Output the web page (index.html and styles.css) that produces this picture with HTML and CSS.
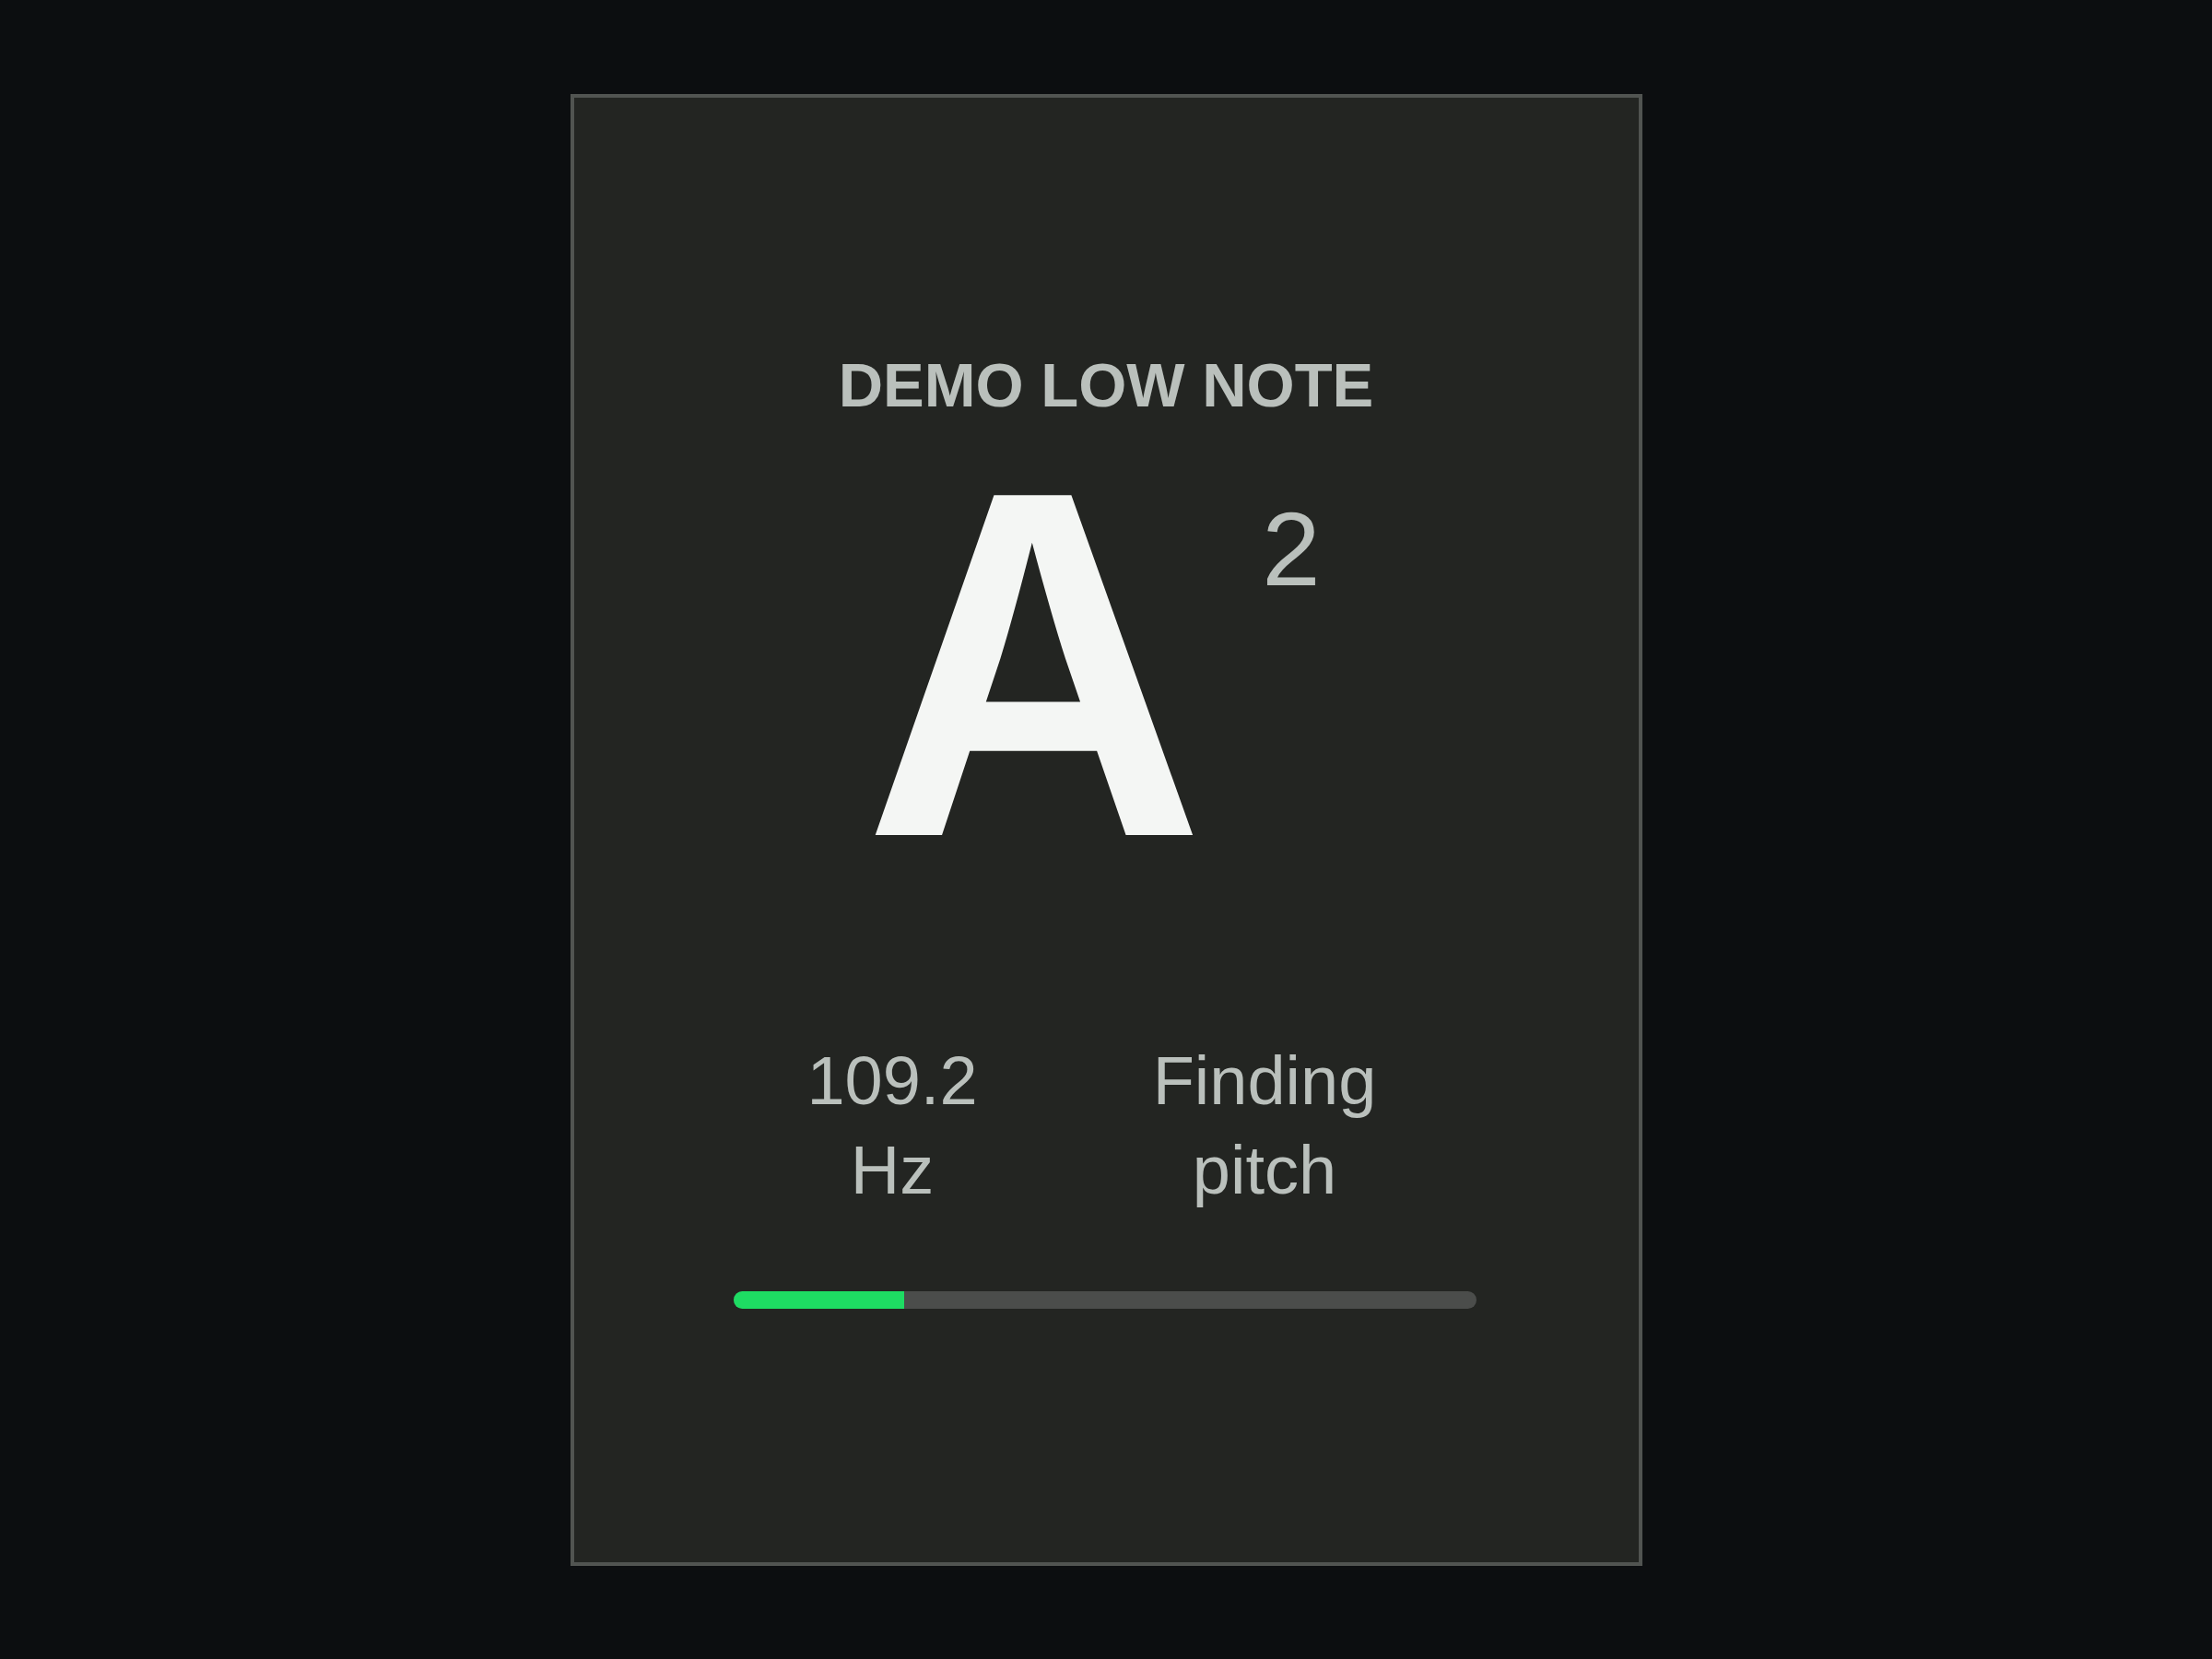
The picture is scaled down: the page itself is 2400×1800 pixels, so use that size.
FILE: index.html
```html
<!DOCTYPE html>
<html lang="en">
<head>
<meta charset="utf-8">
<title>Tuner</title>
<link rel="stylesheet" href="styles.css">
</head>
<body>
<main class="stage">
  <section class="card">
    <h1 class="label">DEMO LOW NOTE</h1>
    <div class="note">
      <span class="note-name">A</span>
      <span class="octave">2</span>
    </div>
    <div class="stats">
      <div class="stat">109.2 Hz</div>
      <div class="stat">Finding pitch</div>
    </div>
    <div class="meter"><div class="meter-fill" style="width: 23%"></div></div>
  </section>
</main>
</body>
</html>
```
FILE: styles.css
```css
html, body {
  margin: 0;
  padding: 0;
  background: #0c0e10;
}

body {
  font-family: "Liberation Sans", Arial, sans-serif;
}

.stage {
  min-height: 100vh;
  display: flex;
  align-items: center;
  justify-content: center;
}

.card {
  position: relative;
  box-sizing: border-box;
  width: 1163px;
  height: 1597px;
  background: #232522;
  border: 4px solid #515451;
  padding-top: 272px;
  display: flex;
  flex-direction: column;
  align-items: center;
}

.card::before {
  content: "";
  position: absolute;
  left: -8px;
  right: -10px;
  top: 83px;
  bottom: 83px;
  background: #3f423f;
  z-index: -1;
}

.label {
  margin: 0;
  font-size: 67px;
  line-height: 80px;
  font-weight: 700;
  color: #bac0bc;
  letter-spacing: 0;
}

.note {
  margin-top: 9px;
  display: flex;
  align-items: flex-start;
  gap: 63px;
  padding-right: 30px;
}

.note-name {
  font-family: Inter, "Liberation Sans", sans-serif;
  font-weight: 600;
  font-size: 507px;
  line-height: 509px;
  color: #f4f6f4;
}

.octave {
  margin-top: 72px;
  font-size: 114px;
  line-height: 114px;
  color: #bac0bc;
}

.stats {
  margin-top: 148px;
  display: flex;
  gap: 124px;
  padding-right: 60px;
}

.stat {
  width: 280px;
  text-align: center;
  font-size: 74px;
  line-height: 97px;
  color: #bac0bc;
}

.meter {
  margin-top: 83px;
  margin-right: 3px;
  width: 806px;
  height: 19px;
  border-radius: 10px;
  background: #4b4d4b;
  overflow: hidden;
}

.meter-fill {
  height: 100%;
  background: #1edc63;
}
```
